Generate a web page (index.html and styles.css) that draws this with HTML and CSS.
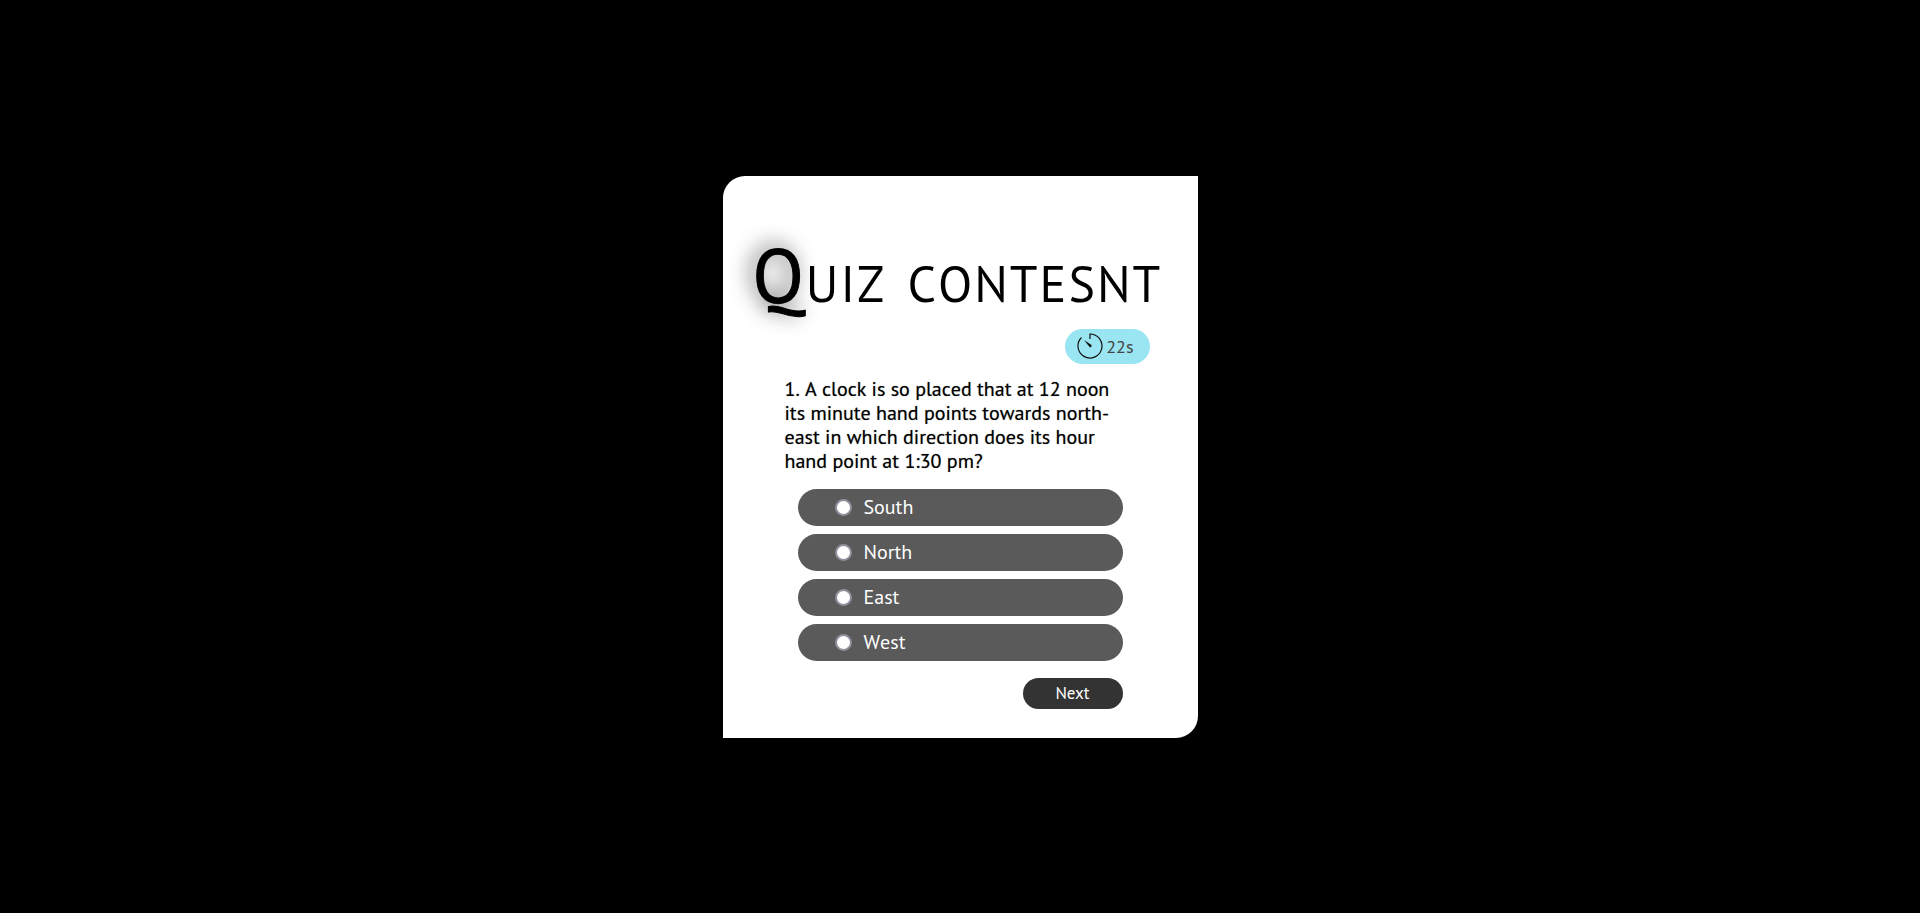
FILE: index.html
```html
<!DOCTYPE html>
<html lang="en">
<head>
<meta charset="utf-8">
<meta name="viewport" content="width=device-width, initial-scale=1">
<title>Quiz</title>
<link rel="stylesheet" href="styles.css">
</head>
<body>
<main class="card">
  <h1 class="title"><span class="initial">Q</span>uiz contesnt</h1>
  <div class="timer">
    <svg class="timer-icon" viewBox="0 0 26 26" aria-hidden="true">
      <path d="M13 6V1A12 12 0 1 1 4.500 4.500" fill="none" stroke="#111" stroke-width="1.200"/>
      <path d="M7 7L14.500 12Q15 14 13 14.500Z" fill="#111"/>
    </svg>
    <span>22s</span>
  </div>
  <form class="quiz">
    <fieldset class="answers">
      <legend class="question">1. A clock is so placed that at 12 noon its minute hand points towards north-east in which direction does its hour hand point at 1:30 pm?</legend>
      <label class="option"><input class="radio" type="radio" name="answer" value="South">South</label>
      <label class="option"><input class="radio" type="radio" name="answer" value="North">North</label>
      <label class="option"><input class="radio" type="radio" name="answer" value="East">East</label>
      <label class="option"><input class="radio" type="radio" name="answer" value="West">West</label>
    </fieldset>
    <button class="next" type="button">Next</button>
  </form>
</main>
</body>
</html>
```
FILE: styles.css
```css
* {
  box-sizing: border-box;
}

body {
  margin: 0;
  min-height: 100vh;
  display: grid;
  place-items: center;
  background: #000;
  color: #000;
  font-family: "PT Sans", "Noto Sans", sans-serif;
  font-kerning: none;
}

.card {
  display: flex;
  flex-direction: column;
  width: 100%;
  max-width: 475px;
  padding: 60px 30px 29px;
  background: #fff;
  border-radius: 22px 0 22px 0;
}

.title {
  margin: 0;
  font-size: 72px;
  font-weight: 400;
  font-variant: small-caps;
  line-height: 80px;
  letter-spacing: 2px;
  white-space: nowrap;
}

.initial {
  font-size: 75px;
  line-height: 0;
  -webkit-text-stroke: 1px #000;
  text-shadow: -5px -3px 20px rgba(0, 0, 0, 0.7);
}

.timer {
  display: flex;
  align-items: center;
  align-self: flex-end;
  gap: 3px;
  height: 35px;
  margin: 13px 18px 13px 0;
  padding: 0 16px 0 12px;
  border-radius: 18px;
  background: #99e5f2;
  color: #444;
  font-size: 18px;
}

.timer-icon {
  width: 26px;
  height: 26px;
}

.quiz {
  display: flex;
  flex-direction: column;
  padding: 0 45px 0 32px;
}

.answers {
  display: flex;
  flex-direction: column;
  gap: 8px;
  min-width: 0;
  margin: 0;
  padding: 0 0 0 13px;
  border: 0;
}

.question {
  width: 336px;
  margin: 0 0 16px -13px;
  padding: 0;
  font-size: 20px;
  line-height: 24px;
  text-shadow: 0 0 1px rgba(0, 0, 0, 0.5);
}

.option {
  display: flex;
  align-items: center;
  gap: 12px;
  height: 37px;
  padding: 0 37px;
  border-radius: 19px;
  background: #5a5a5a;
  color: #fff;
  font-size: 20px;
}

.radio {
  appearance: none;
  width: 17px;
  height: 17px;
  margin: 0;
  border: 2px solid #8f8f9d;
  border-radius: 50%;
  background: #fff;
}

.radio:checked {
  background: #333;
}

.next {
  align-self: flex-end;
  width: 100px;
  height: 31px;
  margin-top: 17px;
  padding: 0;
  border: 0;
  border-radius: 16px;
  background: #333;
  color: #fff;
  font-family: inherit;
  font-size: 17px;
}
```
